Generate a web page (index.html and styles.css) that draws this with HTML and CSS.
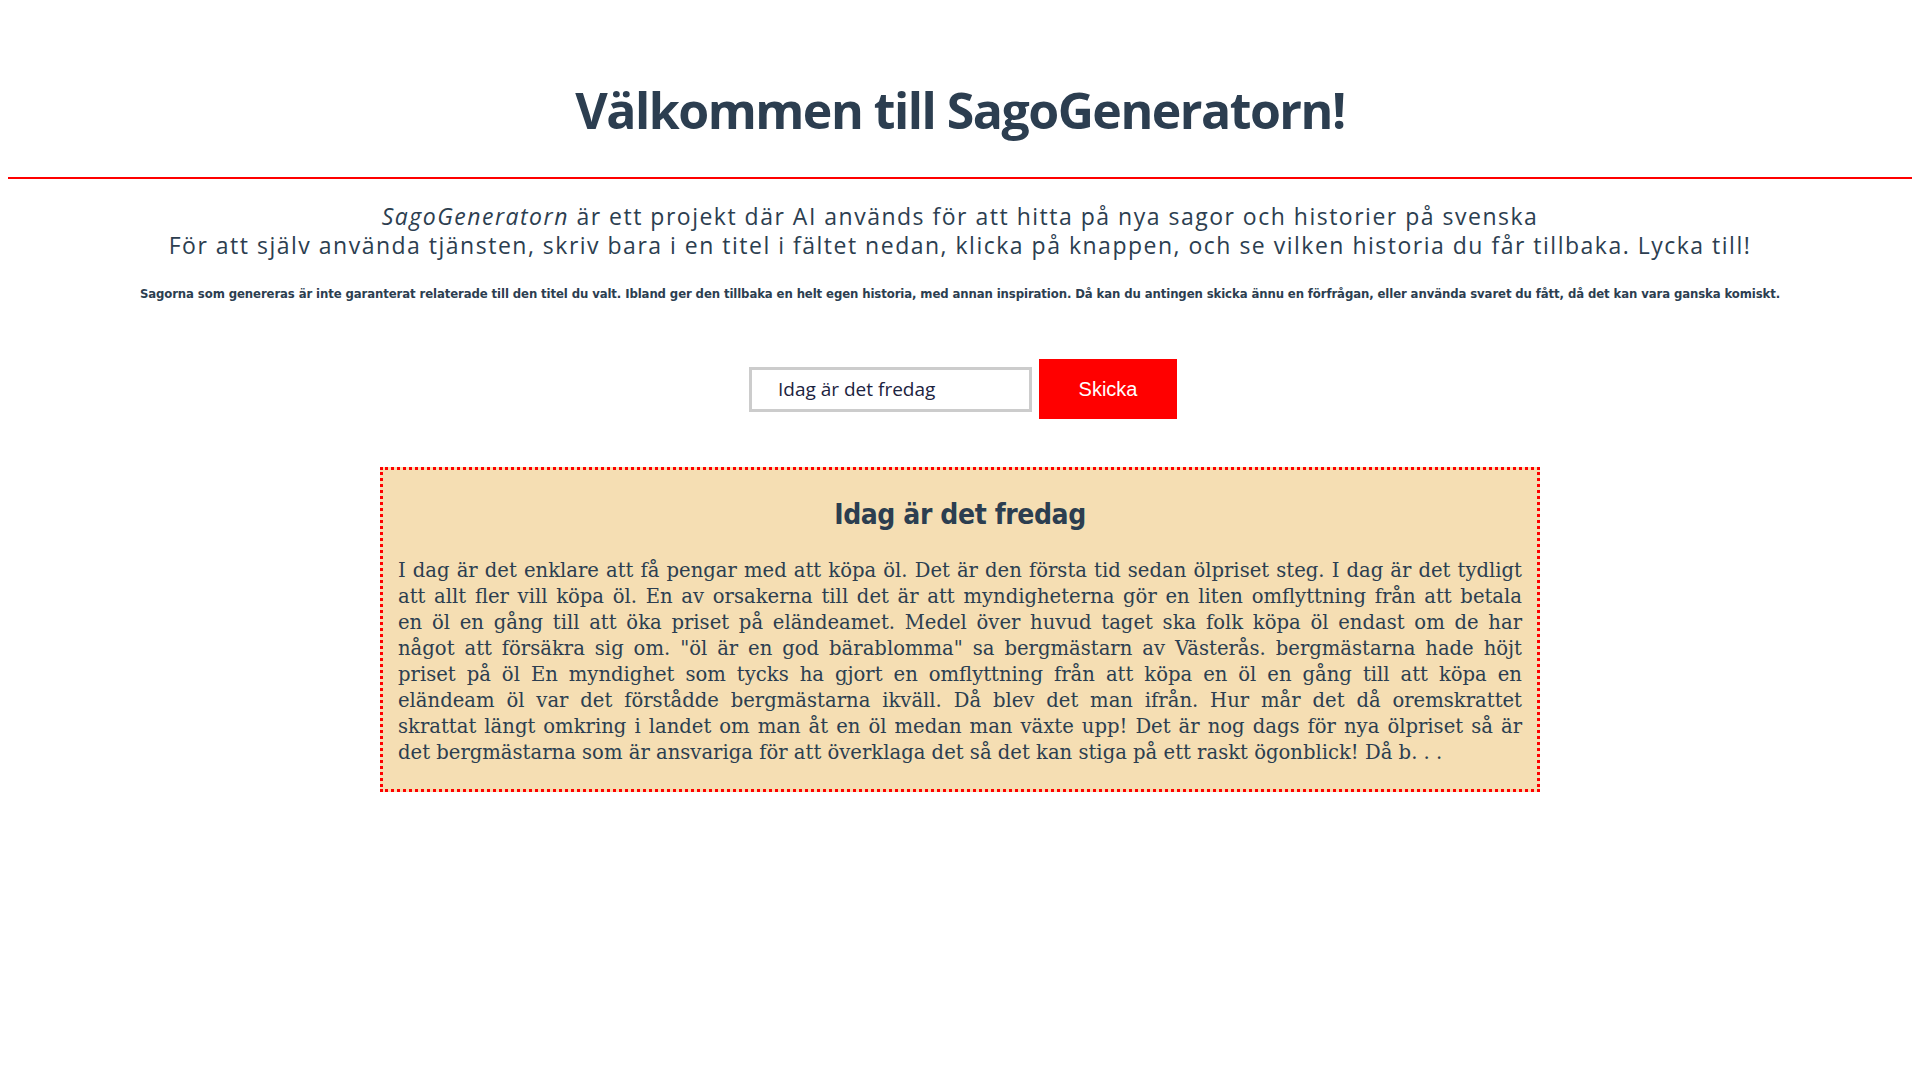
FILE: index.html
```html
<!DOCTYPE html>
<html lang="sv">
<head>
<meta charset="utf-8">
<title>SagoGeneratorn</title>
<link rel="stylesheet" href="styles.css">
</head>
<body>
<header class="header">
  <h1 class="title">Välkommen till SagoGeneratorn!</h1>
</header>
<hr class="divider">
<section class="intro">
  <p class="intro-text"><em>SagoGeneratorn</em> är ett projekt där AI används för att hitta på nya sagor och historier på svenska<br>För att själv använda tjänsten, skriv bara i en titel i fältet nedan, klicka på knappen, och se vilken historia du får tillbaka. Lycka till!</p>
  <p class="note">Sagorna som genereras är inte garanterat relaterade till den titel du valt. Ibland ger den tillbaka en helt egen historia, med annan inspiration. Då kan du antingen skicka ännu en förfrågan, eller använda svaret du fått, då det kan vara ganska komiskt.</p>
</section>
<form class="form-row" onsubmit="return false;">
  <input class="title-input" type="text" value="Idag är det fredag">
  <button class="send-btn" type="submit">Skicka</button>
</form>
<article class="story">
  <h2 class="story-title">Idag är det fredag</h2>
  <p class="story-text">
    <span class="line">I dag är det enklare att få pengar med att köpa öl. Det är den första tid sedan ölpriset steg. I dag är det tydligt</span>
    <span class="line">att allt fler vill köpa öl. En av orsakerna till det är att myndigheterna gör en liten omflyttning från att betala</span>
    <span class="line">en öl en gång till att öka priset på eländeamet. Medel över huvud taget ska folk köpa öl endast om de har</span>
    <span class="line">något att försäkra sig om. "öl är en god bärablomma" sa bergmästarn av Västerås. bergmästarna hade höjt</span>
    <span class="line">priset på öl En myndighet som tycks ha gjort en omflyttning från att köpa en öl en gång till att köpa en</span>
    <span class="line">eländeam öl var det förstådde bergmästarna ikväll. Då blev det man ifrån. Hur mår det då oremskrattet</span>
    <span class="line">skrattat längt omkring i landet om man åt en öl medan man växte upp! Det är nog dags för nya ölpriset så är</span>
    <span class="line last">det bergmästarna som är ansvariga för att överklaga det så det kan stiga på ett raskt ögonblick! Då b. . .</span>
  </p>
</article>
</body>
</html>
```

FILE: styles.css
```css
html, body {
  background: #ffffff;
}
body {
  margin: 8px;
  color: #2c3e50;
  font-family: "Open Sans", "Noto Sans", sans-serif;
}
.header {
  padding-top: 71px;
}
.title {
  margin: 0;
  text-align: center;
  font-family: "Open Sans", "Noto Sans", sans-serif;
  font-weight: 700;
  font-size: 50px;
  line-height: 62px;
  letter-spacing: -1.5px;
  color: #2c3e50;
}
.divider {
  margin: 36px 0 0 0;
  border: 0;
  height: 2px;
  background: #ff0000;
}
.intro {
  text-align: center;
  padding-top: 23px;
}
.intro-text {
  margin: 0;
  font-family: "Open Sans", "Noto Sans", sans-serif;
  font-weight: 400;
  font-size: 23px;
  line-height: 29px;
  letter-spacing: 1.5px;
  color: #2c3e50;
}
.note {
  margin: 26px 0 0 0;
  font-family: "Liberation Sans Narrow", "DejaVu Sans Condensed", sans-serif;
  font-weight: 700;
  font-size: 13px;
  line-height: 16px;
  letter-spacing: -0.1px;
  color: #2c3e50;
}
.form-row {
  display: flex;
  justify-content: center;
  align-items: center;
  gap: 7px;
  margin: 57px 0 0 6px;
}
.title-input {
  box-sizing: border-box;
  width: 283px;
  height: 45px;
  border: 3px solid #cccccc;
  padding: 0 0 0 26px;
  font-family: "Open Sans", "Noto Sans", sans-serif;
  font-size: 19px;
  color: #1c2340;
  background: #ffffff;
  outline: none;
}
.send-btn {
  width: 138px;
  height: 60px;
  border: 0;
  background: #ff0000;
  color: #ffffff;
  font-family: "Liberation Sans", Arial, sans-serif;
  font-size: 20px;
  cursor: pointer;
}
.story {
  box-sizing: border-box;
  width: 1160px;
  margin: 48px auto 0 auto;
  padding: 20px 15px 23px 15px;
  background: #f5deb3;
  border: 3px dotted #ff0000;
}
.story-title {
  margin: 0;
  text-align: center;
  font-family: "Liberation Sans Narrow", "DejaVu Sans Condensed", sans-serif;
  font-weight: 700;
  font-size: 28px;
  line-height: 50px;
  letter-spacing: -0.4px;
  color: #2c3e50;
}
.story-text {
  margin: 18px 0 0 0;
  font-family: "DejaVu Serif", Georgia, serif;
  font-size: 19.6px;
  line-height: 26px;
  color: #2c3e50;
}
.line {
  display: block;
  text-align: justify;
  text-align-last: justify;
}
.line.last {
  text-align-last: left;
}
```
